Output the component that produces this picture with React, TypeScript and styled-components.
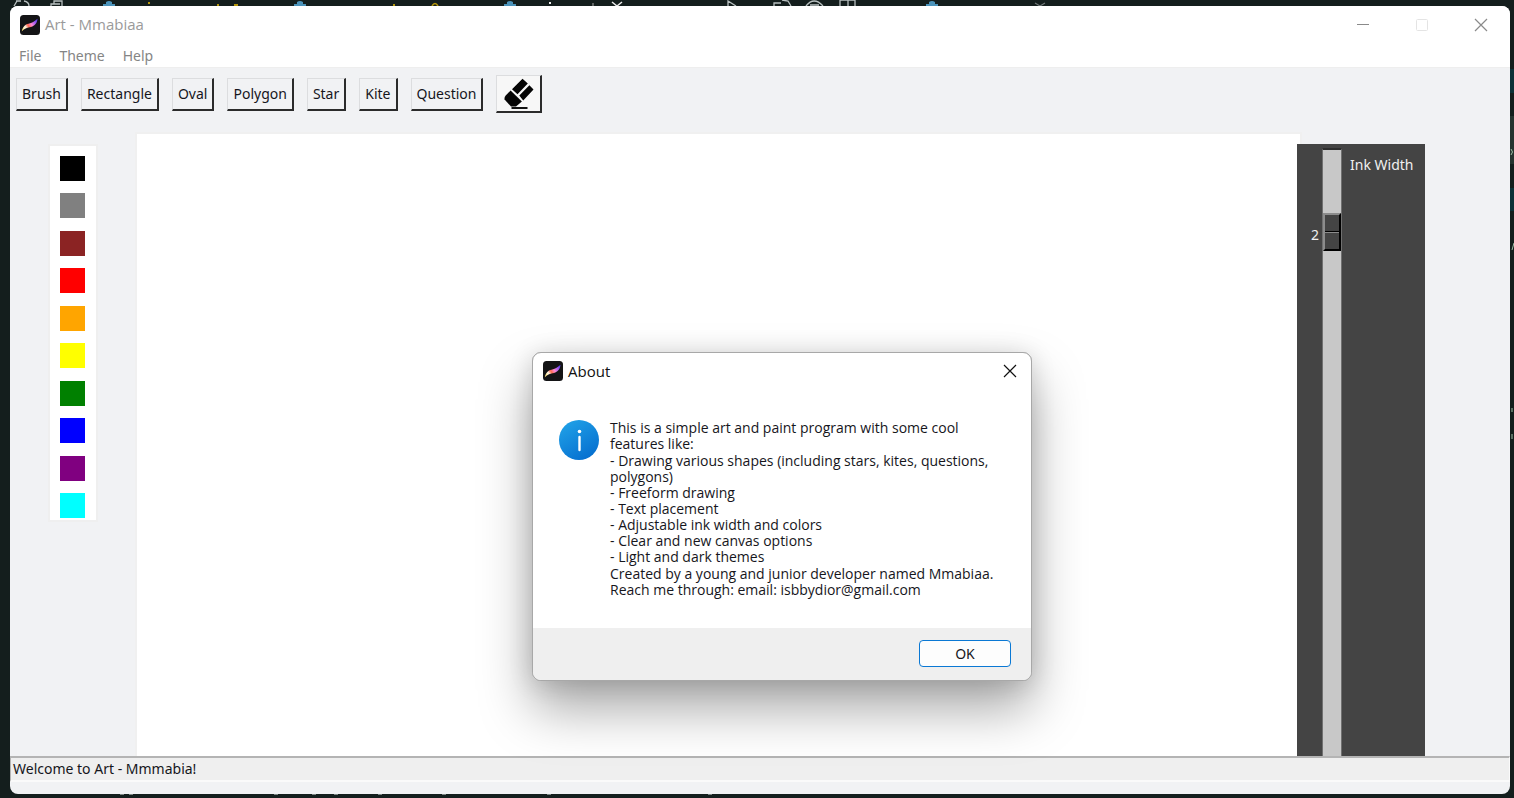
import React from "react";
import styled, { createGlobalStyle } from "styled-components";

const Global = createGlobalStyle`
  * { box-sizing: border-box; }
  html, body { margin: 0; padding: 0; }
  body {
    background: #141e1d;
    font-family: "Noto Sans", "Open Sans", sans-serif;
    color: #16161c;
  }
  button, input { font: inherit; color: inherit; }
`;

const Desktop = styled.div`
  position: relative;
  height: 100vh;
  overflow: hidden;
  padding: 6px 4px 4px 10px;
  background: #141e1d;
`;

const Backdrop = styled.svg<{ $edge: "top" | "bottom" | "right" }>`
  position: absolute;
  ${(p) => (p.$edge === "bottom" ? "bottom: 0;" : "top: 0;")}
  ${(p) => (p.$edge === "right" ? "right: 0;" : "left: 0;")}
`;

const Window = styled.main`
  position: relative;
  display: flex;
  flex-direction: column;
  height: 100%;
  overflow: hidden;
  border-radius: 8px;
  background: #f1f2f4;
`;

const TitleBar = styled.header`
  display: flex;
  align-items: center;
  gap: 5px;
  height: 37px;
  flex: none;
  padding: 0 0 0 10px;
  background: #fff;
`;

const WindowTitle = styled.h1`
  flex: 1;
  margin: 0;
  padding-bottom: 2px;
  font-family: "Open Sans", sans-serif;
  font-size: 15px;
  line-height: 20px;
  font-weight: 400;
  color: #9a9a9a;
`;

const Captions = styled.div`
  display: flex;
`;

const Caption = styled.button`
  display: flex;
  align-items: center;
  justify-content: center;
  width: 59px;
  height: 37px;
  padding: 0;
  border: 0;
  background: none;
`;

const MenuBar = styled.nav`
  display: flex;
  gap: 18px;
  flex: none;
  height: 25px;
  padding: 2px 9px 0;
  background: #fff;
  border-bottom: 1px solid #eeeeee;
`;

const MenuItem = styled.button`
  padding: 0;
  border: 0;
  background: none;
  font-size: 14px;
  line-height: 22px;
  height: 22px;
  color: #858585;
`;

const Toolbar = styled.div`
  display: flex;
  align-items: center;
  gap: 13px;
  flex: none;
  height: 52px;
  padding: 0 6px;
`;

const Tool = styled.button<{ $picture?: boolean }>`
  display: flex;
  align-items: center;
  justify-content: center;
  height: ${(p) => (p.$picture ? 38 : 33)}px;
  width: ${(p) => (p.$picture ? "46px" : "auto")};
  padding: ${(p) => (p.$picture ? "0" : "0 5px")};
  border: 1px solid #dcdddf;
  border-right: 2px solid #2b2b2b;
  border-bottom: 2px solid #2b2b2b;
  background: ${(p) => (p.$picture ? "#f7f7f7" : "#f1f2f4")};
  font-size: 14px;
  line-height: 20px;
`;

const Workspace = styled.div`
  display: flex;
  flex: 1;
  min-height: 0;
  padding: 12px 85px 0 38px;
`;

const Palette = styled.div`
  display: flex;
  flex-direction: column;
  justify-content: space-between;
  flex: none;
  width: 50px;
  height: 378px;
  margin: 12px 37px 0 0;
  padding: 10px 10px 2px;
  border: 2px solid #efefef;
  background: #fff;
`;

const Swatch = styled.button<{ $color: string }>`
  width: 25px;
  height: 25px;
  padding: 0;
  border: 0;
  background: ${(p) => p.$color};
`;

const Canvas = styled.section`
  flex: 1;
  min-width: 0;
  border: 2px solid #f0f0f0;
  border-bottom: 0;
  background: #fff;
`;

const InkPanel = styled.label`
  position: relative;
  display: flex;
  flex: none;
  width: 128px;
  margin: 12px 0 0 -5px;
  padding: 4px 0 0;
  background: #444;
  color: #f0f0f0;
  font-size: 14px;
  line-height: 20px;
`;

const InkValue = styled.output`
  width: 25px;
  padding: 77px 3px 0 0;
  text-align: right;
`;

const InkSlider = styled.input`
  appearance: none;
  writing-mode: vertical-lr;
  width: 20px;
  height: 100%;
  margin: 0 8px 0 0;
  padding: 0;
  border: 1px solid #707070;
  border-top: 2px solid #2e2e2e;
  border-bottom: 0;
  background: #c8c8c8;
  &::-webkit-slider-thumb {
    appearance: none;
    width: 18px;
    height: 38px;
    border: 1px solid;
    border-width: 2px;
    border-color: #8c8c8c #000 #000 #8c8c8c;
    background: linear-gradient(#444 0 16px, #000 16px 17px, #8c8c8c 17px 18px, #444 18px);
  }
`;

const InkLabel = styled.span`
  padding-top: 7px;
`;

const StatusBar = styled.footer`
  flex: none;
  height: 26px;
  margin-bottom: 12px;
  padding: 0 2px;
  border: solid;
  border-width: 2px 1px;
  border-color: #b4b4b4 #fafafa #fafafa #b4b4b4;
  background: #efefef;
  font-size: 14px;
  line-height: 21px;
`;

const Dialog = styled.div`
  position: absolute;
  left: calc(50% + 25px);
  top: 352px;
  transform: translateX(-50%);
  width: 500px;
  overflow: hidden;
  border: 1px solid #a8a8a8;
  border-radius: 9px;
  background: #fff;
`;

const DialogShadow = styled(Dialog)`
  height: 329px;
  box-shadow: 0 28px 52px rgba(0, 0, 0, 0.34), 0 2px 24px rgba(0, 0, 0, 0.14);
`;

const DialogHeader = styled.header`
  display: flex;
  align-items: center;
  gap: 5px;
  height: 36px;
  padding-left: 10px;
`;

const DialogTitle = styled.h2`
  flex: 1;
  margin: 0;
  font-family: "Open Sans", sans-serif;
  font-size: 15px;
  line-height: 20px;
  font-weight: 400;
  color: #111;
`;

const DialogClose = styled(Caption)`
  width: 42px;
`;

const DialogBody = styled.div`
  display: flex;
  gap: 11px;
  height: 239px;
  padding: 31px 26px 0;
`;

const Message = styled.div`
  display: flex;
  flex-direction: column;
  gap: 1px;
  font-family: "Open Sans", sans-serif;
  font-size: 14px;
  line-height: 16px;
  white-space: nowrap;
`;

const Paragraph = styled.p`
  margin: 0;
`;

const DialogFooter = styled.footer`
  display: flex;
  justify-content: flex-end;
  height: 52px;
  padding: 12px 20px;
  background: #efefef;
`;

const OkButton = styled.button`
  width: 92px;
  height: 27px;
  padding: 0;
  border: 1px solid #0a78d4;
  border-radius: 4px;
  background: #fdfdfd;
  font-size: 14px;
  line-height: 20px;
`;

const AppIcon = ({ id }: { id: string }) => (
  <svg width="20" height="20" viewBox="0 0 20 20" aria-hidden="true">
    <defs>
      <linearGradient id={id} x1="2" y1="15" x2="17" y2="5" gradientUnits="userSpaceOnUse">
        <stop offset="0" stopColor="#ffe070" />
        <stop offset="0.25" stopColor="#fff6e6" />
        <stop offset="0.42" stopColor="#ff6a50" />
        <stop offset="0.6" stopColor="#ff8ad0" />
        <stop offset="0.8" stopColor="#b060f0" />
        <stop offset="1" stopColor="#5a3cf0" />
      </linearGradient>
    </defs>
    <rect width="20" height="20" rx="3.5" fill="#141416" />
    <path d="M1.800 16.200C2.600 12 5 9.300 8.500 8.700C12 8.200 14.500 6.500 17.500 3.800C17.200 8 14.800 11 11 11.900C7.500 12.500 4.500 13.200 1.800 16.200Z" fill={`url(#${id})`} />
  </svg>
);

const Cross = ({ color }: { color: string }) => (
  <svg width="14" height="14" viewBox="0 0 14 14" aria-hidden="true">
    <path d="M1 1L13 13M13 1L1 13" stroke={color} strokeWidth="1.2" fill="none" />
  </svg>
);

const Eraser = () => (
  <svg width="32" height="34" viewBox="0 0 32 34" aria-hidden="true">
    <path d="M9 12.300L19.500 1.800L24.800 6.600L14.500 17.200ZM16.300 18.600L26.400 8.200L30.500 12.500L20.200 23.400Z" fill="#050505" />
    <path d="M7.600 13.400L18.900 24.600L13 29.600H8L1.600 22.500Q1.200 20.500 2.500 18.800Z" fill="#050505" />
    <path d="M8.500 31H24.500" stroke="#111" strokeWidth="2.200" />
  </svg>
);

const InfoIcon = () => (
  <svg width="40" height="40" viewBox="0 0 40 40" role="img" aria-label="Information">
    <defs>
      <linearGradient id="info" x1="8" y1="2" x2="30" y2="38" gradientUnits="userSpaceOnUse">
        <stop offset="0" stopColor="#1f9fe6" />
        <stop offset="1" stopColor="#0670d0" />
      </linearGradient>
    </defs>
    <circle cx="20" cy="20" r="20" fill="url(#info)" />
    <circle cx="20.500" cy="11.500" r="1.800" fill="#fff" />
    <path d="M20.500 17V30" stroke="#fff" strokeWidth="2.400" strokeLinecap="round" />
  </svg>
);

const snakes = [109, 300, 510, 932];
const lowerMarks = [120, 129, 274, 312, 334, 378, 442, 547, 708];

const TopBackdrop = () => (
  <Backdrop $edge="top" width="1514" height="6" aria-hidden="true">
    {snakes.map((x) => (
      <path key={x} d={`M${x - 6} 6V4H${x - 3}V2Q${x} 0 ${x + 3} 2V4H${x + 6}V6Z`} fill="#4b93ba" />
    ))}
    <path d="M14 6L17 1M16 1H21M24 1Q29 2 29 6M51 6V4H60M54 4V1H62V6" stroke="#b8c0c0" strokeWidth="1.3" fill="none" />
    <path d="M148 2H150V4H148ZM217 4H219V6H217ZM234 4H238V6H234ZM393 4H395V6H393Z" fill="#b5960b" />
    <path d="M432 6Q435 1 438 6" stroke="#b5960b" strokeWidth="1.500" fill="none" />
    <path d="M549 2H551V4H549Z" fill="#eee" />
    <path d="M593 3V6" stroke="#aaa" />
    <path d="M612 2L617 6L622 2" stroke="#eee" strokeWidth="1.500" fill="none" />
    <path d="M728 6V1L736 6M774 6V3H781M782 0L788 1L791 6M806 6Q814 -4 823 6M810 5H819M840 6V0H855V6M848 0V6" stroke="#b8c0c0" strokeWidth="1.300" fill="none" />
    <path d="M1035 3L1040 6L1045 3" stroke="#707878" strokeWidth="1.200" fill="none" />
  </Backdrop>
);

const tools = ["Brush", "Rectangle", "Oval", "Polygon", "Star", "Kite", "Question"];
const colors = ["black", "gray", "#8b2323", "red", "orange", "yellow", "green", "blue", "purple", "cyan"];
const features = [
  <>- Drawing various shapes (including stars, kites, questions,<br />polygons)</>,
  "- Freeform drawing",
  "- Text placement",
  "- Adjustable ink width and colors",
  "- Clear and new canvas options",
  "- Light and dark themes",
];

export default function App() {
  const [ink, setInk] = React.useState(2);
  return (
    <Desktop>
      <Global />
      <TopBackdrop />
      <Backdrop $edge="bottom" width="1514" height="4" aria-hidden="true">
        {lowerMarks.map((x) => (
          <path key={x} d={`M${x} 0.500H${x + 4}`} stroke="#7c8684" />
        ))}
      </Backdrop>
      <Backdrop $edge="right" width="4" height="500" aria-hidden="true">
        <path d="M0 69H4V93H0ZM0 188H4V211H0Z" fill="#0c3238" />
        <path d="M0 116H4V164H0Z" fill="#26332f" />
        <path d="M1 149Q4 152 1 155M2 250L4 243M2 408V412M2 434V439" stroke="#9fc0a8" fill="none" />
      </Backdrop>
      <Window>
        <TitleBar>
          <AppIcon id="stroke-main" />
          <WindowTitle>Art - Mmabiaa</WindowTitle>
          <Captions>
            <Caption aria-label="Minimize">
              <svg width="12" height="12" aria-hidden="true"><path d="M0 5.500H12" stroke="#8a8a8a" /></svg>
            </Caption>
            <Caption aria-label="Maximize" disabled>
              <svg width="12" height="12" aria-hidden="true"><rect x="0.500" y="0.500" width="11" height="11" rx="1" fill="none" stroke="#e4e4e4" /></svg>
            </Caption>
            <Caption aria-label="Close"><Cross color="#8a8a8a" /></Caption>
          </Captions>
        </TitleBar>
        <MenuBar>
          <MenuItem>File</MenuItem>
          <MenuItem>Theme</MenuItem>
          <MenuItem>Help</MenuItem>
        </MenuBar>
        <Toolbar>
          {tools.map((t) => <Tool key={t}>{t}</Tool>)}
          <Tool $picture aria-label="Eraser"><Eraser /></Tool>
        </Toolbar>
        <Workspace>
          <Palette>
            {colors.map((c) => <Swatch key={c} $color={c} aria-label={c} />)}
          </Palette>
          <Canvas aria-label="Canvas" />
          <InkPanel htmlFor="ink">
            <InkValue>{ink}</InkValue>
            <InkSlider id="ink" type="range" min={1} max={10} value={ink} onChange={(e) => setInk(Number(e.target.value))} />
            <InkLabel>Ink Width</InkLabel>
          </InkPanel>
        </Workspace>
        <StatusBar>Welcome to Art - Mmmabia!</StatusBar>
      </Window>
      <DialogShadow aria-hidden="true" />
      <Dialog role="dialog" aria-labelledby="about-title">
        <DialogHeader>
          <AppIcon id="stroke-about" />
          <DialogTitle id="about-title">About</DialogTitle>
          <DialogClose aria-label="Close"><Cross color="#111" /></DialogClose>
        </DialogHeader>
        <DialogBody>
          <InfoIcon />
          <Message>
            <Paragraph>This is a simple art and paint program with some cool<br />features like:</Paragraph>
            <div>
              {features.map((f, i) => <Paragraph key={i}>{f}</Paragraph>)}
            </div>
            <Paragraph>
              Created by a young and junior developer named Mmabiaa.<br />
              Reach me through: email: isbbydior@gmail.com
            </Paragraph>
          </Message>
        </DialogBody>
        <DialogFooter><OkButton>OK</OkButton></DialogFooter>
      </Dialog>
    </Desktop>
  );
}
